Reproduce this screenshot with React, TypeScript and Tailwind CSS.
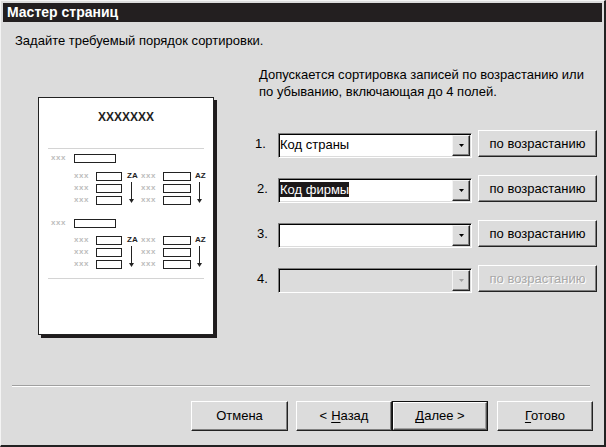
import type { ReactNode } from "react";

const font = { fontFamily: '"Liberation Sans", Arial, sans-serif' };

function SortArrow() {
  return (
    <svg width="7" height="22" viewBox="0 0 7 22" className="block">
      <line x1="3.5" y1="0" x2="3.5" y2="20" stroke="#222" strokeWidth="1" />
      <path d="M1 17 L3.5 21 L6 17 Z" fill="#222" />
    </svg>
  );
}

function Box({ w }: { w: string }) {
  return <div className={`${w} h-[9px] border border-[#222] bg-white`} />;
}

function Xxx({ w }: { w: string }) {
  return (
    <span className={`${w} text-[8px] font-bold leading-none tracking-[0.5px] text-[#bdbdbd]`}>
      xxx
    </span>
  );
}

function SubGroup() {
  return (
    <div className="flex pl-[35px]">
      <div className="flex flex-col">
        {[0, 1, 2].map((i) => (
          <div key={i} className="flex h-[12px] items-center">
            <Xxx w="w-[22px]" />
            <Box w="w-[26px]" />
          </div>
        ))}
      </div>
      <div className="ml-[5px] flex w-[14px] flex-col">
        <span className="h-[12px] text-[8px] font-bold leading-[12px] text-[#222]">ZA</span>
        <div className="pl-[1px]">
          <SortArrow />
        </div>
      </div>
      <div className="flex flex-col">
        {[0, 1, 2].map((i) => (
          <div key={i} className="flex h-[12px] items-center">
            <Xxx w="w-[22px]" />
            <Box w="w-[28px]" />
          </div>
        ))}
      </div>
      <div className="ml-[4px] flex w-[14px] flex-col">
        <span className="h-[12px] text-[8px] font-bold leading-[12px] text-[#222]">AZ</span>
        <div className="pl-[1px]">
          <SortArrow />
        </div>
      </div>
    </div>
  );
}

function GroupHeader() {
  return (
    <div className="flex h-[12px] items-center pl-[12px]">
      <Xxx w="w-[23px]" />
      <Box w="w-[42px]" />
    </div>
  );
}

function Preview() {
  return (
    <div className="ml-[35px] mt-[48px] flex h-[238px] w-[176px] flex-col border border-[#222] bg-white pt-[13px] shadow-[3px_3px_0_#1f1c1d]">
      <div className="h-[12px] text-center text-[12px] font-bold leading-[12px] text-[#222]">
        XXXXXXX
      </div>
      <div className="mx-[9px] mt-[25px] h-px bg-[#d4d4d4]" />
      <div className="mt-[3px]">
        <GroupHeader />
      </div>
      <div className="mt-[6px]">
        <SubGroup />
      </div>
      <div className="mt-[11px]">
        <GroupHeader />
      </div>
      <div className="mt-[5px]">
        <SubGroup />
      </div>
      <div className="mx-[9px] mt-[8px] h-px bg-[#d4d4d4]" />
    </div>
  );
}

function Combo({
  value,
  selected,
  disabled,
}: {
  value?: string;
  selected?: boolean;
  disabled?: boolean;
}) {
  return (
    <div
      className={`mt-[3px] flex h-[25px] w-[194px] items-stretch border border-[#808080] border-b-white border-r-white shadow-[inset_1px_1px_0_#000,inset_-1px_-1px_0_#dcdcdc] ${
        disabled ? "bg-[#dcdcdc]" : "bg-white"
      }`}
    >
      <div className="flex flex-1 items-center pb-[2px] pl-[1px]">
        {value && (
          <span
            className={`text-[13px] leading-[15px] ${
              selected ? "bg-[#1b1819] text-white" : "text-black"
            }`}
          >
            {value}
          </span>
        )}
      </div>
      <div className="my-[1px] mr-[1px] flex w-[18px] items-center justify-center border border-[#f4f4f4] border-b-[#222] border-r-[#222] bg-[#dcdcdc] shadow-[inset_-1px_-1px_0_#808080]">
        <svg width="5" height="3" viewBox="0 0 5 3">
          <path d="M0 0 H5 L2.5 3 Z" fill={disabled ? "#a0a0a0" : "#000"} />
        </svg>
      </div>
    </div>
  );
}

function Button({
  children,
  w,
  disabled,
  focused,
}: {
  children: ReactNode;
  w: string;
  disabled?: boolean;
  focused?: boolean;
}) {
  const base = `${w} flex items-center justify-center bg-[#dcdcdc] text-[13px]`;
  if (focused) {
    return (
      <div className={`${base} border border-[#111]`}>
        <div className="flex h-full w-full items-center justify-center border border-white border-b-[#555] border-r-[#555] shadow-[inset_-1px_-1px_0_#a0a0a0]">
          {children}
        </div>
      </div>
    );
  }
  return (
    <div
      className={`${base} border border-white border-b-[#222] border-r-[#222] shadow-[inset_-1px_-1px_0_#808080] ${
        disabled ? "text-[#a8a8a8] [text-shadow:1px_1px_0_#fff]" : "text-black"
      }`}
    >
      {children}
    </div>
  );
}

const rows = [
  { n: "1.", value: "Код страны" },
  { n: "2.", value: "Код фирмы", selected: true },
  { n: "3.", value: "" },
  { n: "4.", value: "", disabled: true },
];

export default function App() {
  return (
    <div
      style={font}
      className="flex h-[447px] w-[606px] flex-col border-l border-t border-[#f4f4f4] border-b-2 border-r-2 border-b-[#222] border-r-[#222] bg-[#dcdcdc] p-[2px] text-black"
    >
      <div className="flex h-[19px] items-center bg-[#231f20] pl-[4px] text-[14px] font-bold text-white">
        Мастер страниц
      </div>

      <div className="mt-[11px] pl-[12px] text-[13px] leading-[16px]">
        Задайте требуемый порядок сортировки.
      </div>

      <div className="flex flex-1">
        <Preview />

        <div className="ml-[41px] flex flex-col">
          <p className="mt-[17px] pl-[4px] text-[13px] leading-[17px]">
            Допускается сортировка записей по возрастанию или
            <br />
            по убыванию, включающая до 4 полей.
          </p>

          <div className="mt-[30px] flex flex-col gap-[17px]">
            {rows.map((r) => (
              <div key={r.n} className="flex h-[28px] items-start">
                <span
                  className={`mt-[6px] w-[23px] text-[13px] leading-[16px] ${
                    r.n === "1." ? "" : "pl-[2px]"
                  }`}
                >
                  {r.n}
                </span>
                <Combo value={r.value} selected={r.selected} disabled={r.disabled} />
                <div className="ml-[6px] flex h-[27px]">
                  <Button w="w-[119px]" disabled={r.disabled}>
                    по возрастанию
                  </Button>
                </div>
              </div>
            ))}
          </div>
        </div>
      </div>

      <div className="ml-[9px] mr-[12px] h-[2px] border-t border-[#a0a0a0] border-b border-b-white" />

      <div className="mb-[12px] mr-[9px] mt-[14px] flex h-[30px] justify-end">
        <Button w="w-[97px]">Отмена</Button>
        <div className="ml-[8px] flex">
          <Button w="w-[96px]">
            &lt; <span className="ml-[4px] underline underline-offset-2">Н</span>азад
          </Button>
          <Button w="w-[96px]" focused>
            <span>
              <span className="underline underline-offset-2">Д</span>алее &gt;
            </span>
          </Button>
        </div>
        <div className="ml-[9px] flex">
          <Button w="w-[96px]">
            <span>
              <span className="underline underline-offset-2">Г</span>отово
            </span>
          </Button>
        </div>
      </div>
    </div>
  );
}
